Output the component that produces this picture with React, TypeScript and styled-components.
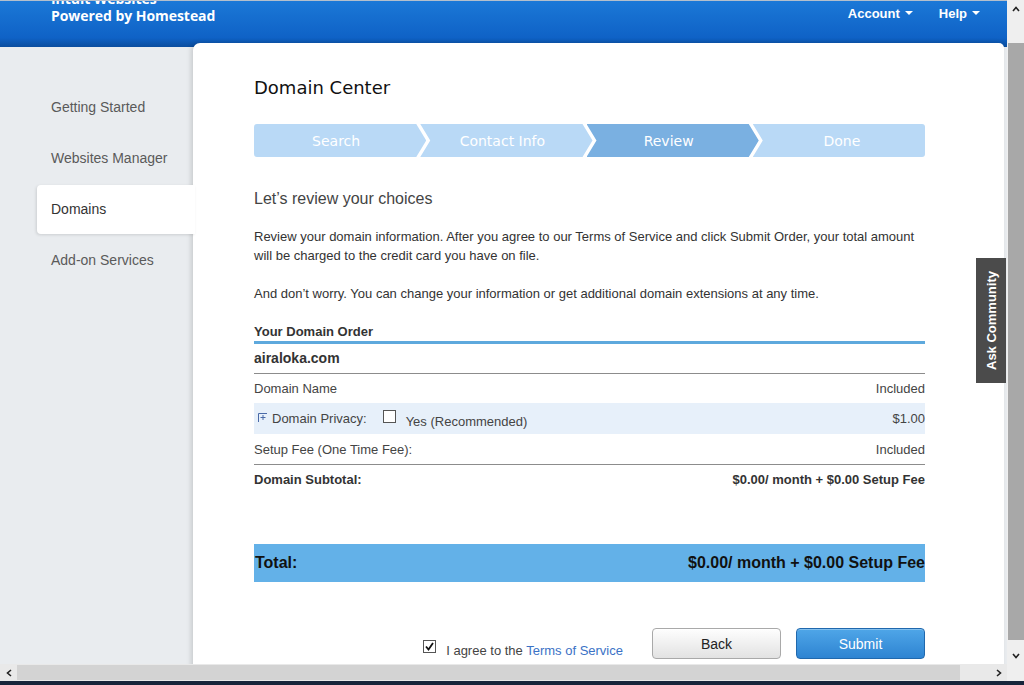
import React from 'react'
import styled, { createGlobalStyle } from 'styled-components'

const GlobalStyle = createGlobalStyle`
    html, body {
        margin: 0;
        padding: 0;
        overflow: hidden;
    }
    body {
        font-family: "Liberation Sans", Arial, sans-serif;
        background: #ffffff;
    }
`

const steps = ['Search', 'Contact Info', 'Review', 'Done']
const navItems = ['Getting Started', 'Websites Manager', 'Domains', 'Add-on Services']

export default function App() {
    return (
        <>
            <GlobalStyle />
            <Frame>
                <Viewport>
                    <Header>
                        <Brand>
                            <BrandLine>Intuit Websites</BrandLine>
                            <BrandLine>Powered by Homestead</BrandLine>
                        </Brand>
                        <TopNav>
                            <TopLink>Account</TopLink>
                            <TopLink>Help</TopLink>
                        </TopNav>
                    </Header>
                    <Body>
                        <Sidebar>
                            {navItems.map((item) => (
                                <NavItem key={item} $active={item === 'Domains'}>
                                    {item}
                                </NavItem>
                            ))}
                        </Sidebar>
                        <Card>
                            <Title>Domain Center</Title>
                            <Stepper>
                                {steps.map((s, i) => (
                                    <Step
                                        key={s}
                                        $active={s === 'Review'}
                                        $first={i === 0}
                                        $last={i === steps.length - 1}
                                    >
                                        {s}
                                    </Step>
                                ))}
                            </Stepper>
                            <SubHeading>Let’s review your choices</SubHeading>
                            <Para>
                                Review your domain information. After you agree to our Terms of Service and click
                                Submit Order, your total amount will be charged to the credit card you have on file.
                            </Para>
                            <Para $gap>
                                And don’t worry. You can change your information or get additional domain extensions
                                at any time.
                            </Para>
                            <OrderHeading>Your Domain Order</OrderHeading>
                            <DomainTitle>airaloka.com</DomainTitle>
                            <Row $h={29}>
                                <span>Domain Name</span>
                                <span>Included</span>
                            </Row>
                            <Row $h={31} $shaded>
                                <PrivacyLeft>
                                    <ExpandIcon width="9" height="9" viewBox="0 0 9 9">
                                        <path d="M0.5 9 V0.5 H9" stroke="#4a6aa8" strokeWidth="1" fill="none" />
                                        <path d="M2.5 4.5 H7.5 M5 2 V7" stroke="#4a6aa8" strokeWidth="1" fill="none" />
                                    </ExpandIcon>
                                    <span>Domain Privacy:</span>
                                    <Box />
                                    <YesText>Yes (Recommended)</YesText>
                                </PrivacyLeft>
                                <span>$1.00</span>
                            </Row>
                            <Row $h={30} $divider>
                                <span>Setup Fee (One Time Fee):</span>
                                <span>Included</span>
                            </Row>
                            <Row $h={29} $bold>
                                <span>Domain Subtotal:</span>
                                <span>$0.00/ month + $0.00 Setup Fee</span>
                            </Row>
                            <TotalBar>
                                <span>Total:</span>
                                <span>$0.00/ month + $0.00 Setup Fee</span>
                            </TotalBar>
                            <Actions>
                                <Agree>
                                    <Box $checked>
                                        <svg width="9" height="9" viewBox="0 0 9 9">
                                            <path d="M1 4.5 L3.5 7.5 L8 1" stroke="#111" strokeWidth="1.8" fill="none" />
                                        </svg>
                                    </Box>
                                    <AgreeText>
                                        I agree to the <TermsLink>Terms of Service</TermsLink>
                                    </AgreeText>
                                </Agree>
                                <Button>Back</Button>
                                <Button $primary>Submit</Button>
                            </Actions>
                        </Card>
                    </Body>
                    <AskTab>Ask Community</AskTab>
                </Viewport>
                <VScroll>
                    <ArrowBox>
                        <svg width="8" height="6" viewBox="0 0 8 6">
                            <path d="M1 5 L4 1.5 L7 5" stroke="#222" strokeWidth="1.6" fill="none" />
                        </svg>
                    </ArrowBox>
                    <VTrack>
                        <VThumb />
                    </VTrack>
                    <ArrowBox>
                        <svg width="8" height="6" viewBox="0 0 8 6">
                            <path d="M1 1 L4 4.5 L7 1" stroke="#222" strokeWidth="1.6" fill="none" />
                        </svg>
                    </ArrowBox>
                </VScroll>
                <HScroll>
                    <ArrowBox>
                        <svg width="6" height="8" viewBox="0 0 6 8">
                            <path d="M5 1 L1.5 4 L5 7" stroke="#222" strokeWidth="1.6" fill="none" />
                        </svg>
                    </ArrowBox>
                    <HTrack>
                        <HThumb />
                    </HTrack>
                    <ArrowBox>
                        <svg width="6" height="8" viewBox="0 0 6 8">
                            <path d="M1 1 L4.5 4 L1 7" stroke="#222" strokeWidth="1.6" fill="none" />
                        </svg>
                    </ArrowBox>
                </HScroll>
                <Corner />
                <BottomEdge />
            </Frame>
        </>
    )
}

const Frame = styled.div`
    display: grid;
    grid-template-columns: 1007px 17px;
    grid-template-rows: 664px 17px 4px;
    width: 1024px;
    height: 685px;
`

const Viewport = styled.div`
    position: relative;
    overflow: hidden;
    background: #e9ecef;
`

const Header = styled.header`
    height: 47px;
    box-sizing: border-box;
    border-top: 1px solid #b4bfcc;
    background: linear-gradient(#1b78d7, #0f62c6 80%, #0a4d9e);
    display: flex;
    justify-content: space-between;
    align-items: flex-start;
    overflow: hidden;
`

const Brand = styled.div`
    margin-top: -11px;
    padding-left: 51px;
    display: flex;
    flex-direction: column;
`

const BrandLine = styled.div`
    font-family: "Open Sans", sans-serif;
    font-weight: 700;
    font-size: 14px;
    line-height: 17px;
    color: #ffffff;
    letter-spacing: -0.05px;
`

const TopNav = styled.nav`
    display: flex;
    gap: 26px;
    padding: 5px 27px 0 0;
`

const TopLink = styled.span`
    display: flex;
    align-items: center;
    gap: 5px;
    font-size: 13px;
    line-height: 16px;
    font-weight: 700;
    color: #ffffff;

    &::after {
        content: '';
        border-left: 4px solid transparent;
        border-right: 4px solid transparent;
        border-top: 4px solid #ffffff;
        margin-top: -2px;
    }
`

const Body = styled.div`
    display: flex;
    align-items: flex-start;
`

const Sidebar = styled.nav`
    width: 193px;
    flex-shrink: 0;
    padding-top: 36px;
    display: flex;
    flex-direction: column;
    gap: 2px;
    position: relative;
    z-index: 2;
`

const NavItem = styled.div<{ $active?: boolean }>`
    margin-left: 37px;
    margin-right: ${(p) => (p.$active ? '-2px' : '0')};
    height: 49px;
    line-height: 49px;
    padding-left: 14px;
    font-size: 14px;
    color: ${(p) => (p.$active ? '#333333' : '#5a5a5a')};
    background: ${(p) => (p.$active ? '#ffffff' : 'transparent')};
    border-radius: 4px 0 0 4px;
    box-shadow: ${(p) => (p.$active ? '-1px 1px 3px rgba(0, 0, 0, 0.12)' : 'none')};
`

const Card = styled.main`
    position: relative;
    z-index: 1;
    width: 811px;
    flex-shrink: 0;
    margin-top: -4px;
    min-height: 640px;
    box-sizing: border-box;
    padding: 33px 79px 0 61px;
    background: #ffffff;
    border-radius: 7px 5px 0 0;
    box-shadow: -2px 0 5px rgba(0, 0, 0, 0.14);
`

const Title = styled.h1`
    margin: 0;
    font-family: "DejaVu Sans", Verdana, sans-serif;
    font-weight: 400;
    font-size: 18px;
    line-height: 24px;
    color: #111111;
`

const Stepper = styled.div`
    display: flex;
    margin-top: 24px;
    height: 33px;
`

const Step = styled.div<{ $active?: boolean; $first?: boolean; $last?: boolean }>`
    flex: none;
    width: calc((100% + 18px) / 4);
    box-sizing: border-box;
    display: flex;
    align-items: center;
    justify-content: center;
    margin-left: ${(p) => (p.$first ? '0' : '-6px')};
    padding: ${(p) => (p.$last ? '0 0 0 6px' : '0 8px 0 0')};
    background: ${(p) => (p.$active ? '#7ab0e1' : '#b9d9f6')};
    color: #ffffff;
    font-family: "DejaVu Sans", Verdana, sans-serif;
    font-size: 14px;
    border-radius: ${(p) => (p.$first ? '3px 0 0 3px' : p.$last ? '0 3px 3px 0' : '0')};
    clip-path: ${(p) =>
        p.$first
            ? 'polygon(0 0, calc(100% - 10px) 0, 100% 50%, calc(100% - 10px) 100%, 0 100%)'
            : p.$last
              ? 'polygon(0 0, 100% 0, 100% 100%, 0 100%, 10px 50%)'
              : 'polygon(0 0, calc(100% - 10px) 0, 100% 50%, calc(100% - 10px) 100%, 0 100%, 10px 50%)'};
`

const SubHeading = styled.h2`
    margin: 32px 0 0;
    font-size: 16px;
    font-weight: 400;
    line-height: 20px;
    color: #444444;
`

const Para = styled.p<{ $gap?: boolean }>`
    margin: ${(p) => (p.$gap ? '19px' : '18px')} 0 0;
    font-size: 13px;
    line-height: 19px;
    color: #333333;
`

const OrderHeading = styled.div`
    margin-top: 19px;
    font-size: 13px;
    font-weight: 700;
    line-height: 19px;
    color: #333333;
    border-bottom: 3px solid #5ea9dd;
`

const DomainTitle = styled.div`
    height: 29px;
    line-height: 28px;
    font-size: 14px;
    font-weight: 700;
    color: #333333;
    border-bottom: 1px solid #8c8c8c;
`

const Row = styled.div<{ $h: number; $shaded?: boolean; $divider?: boolean; $bold?: boolean }>`
    display: flex;
    justify-content: space-between;
    align-items: center;
    height: ${(p) => p.$h}px;
    font-size: 13px;
    font-weight: ${(p) => (p.$bold ? 700 : 400)};
    color: ${(p) => (p.$bold ? '#333333' : '#444444')};
    background: ${(p) => (p.$shaded ? '#e7f0fa' : 'transparent')};
    border-bottom: ${(p) => (p.$divider ? '1px solid #8c8c8c' : 'none')};
`

const PrivacyLeft = styled.div`
    display: flex;
    align-items: center;
    padding-left: 4px;
`

const ExpandIcon = styled.svg`
    align-self: flex-start;
    margin: 5px 5px 0 0;
`

const Box = styled.span<{ $checked?: boolean }>`
    display: inline-flex;
    align-items: center;
    justify-content: center;
    width: 11px;
    height: 11px;
    border: 1px solid #555555;
    background: #ffffff;
    align-self: ${(p) => (p.$checked ? 'flex-start' : 'center')};
    margin: ${(p) => (p.$checked ? '-3px 10px 0 0' : '-4px 10px 0 16px')};
`

const YesText = styled.span`
    margin-top: 6px;
`

const TotalBar = styled.div`
    display: flex;
    justify-content: space-between;
    align-items: center;
    margin-top: 50px;
    height: 38px;
    padding-left: 1px;
    background: #63b1e8;
    font-size: 16px;
    font-weight: 700;
    color: #111111;
`

const Actions = styled.div`
    display: flex;
    justify-content: flex-end;
    align-items: center;
    gap: 15px;
    margin-top: 46px;
`

const Agree = styled.label`
    display: flex;
    align-items: center;
    margin-right: 14px;
    padding-top: 14px;
    font-size: 13px;
    color: #444444;
`

const AgreeText = styled.span`
    line-height: 16px;
`

const TermsLink = styled.a`
    color: #3b72c6;
    text-decoration: none;
`

const Button = styled.button<{ $primary?: boolean }>`
    width: 129px;
    height: 31px;
    border-radius: 4px;
    font-family: "Liberation Sans", Arial, sans-serif;
    font-size: 14px;
    cursor: pointer;
    color: ${(p) => (p.$primary ? '#ffffff' : '#222222')};
    border: 1px solid ${(p) => (p.$primary ? '#2068ad' : '#a9a9a9')};
    background: ${(p) =>
        p.$primary ? 'linear-gradient(#4fa6e8, #2e84d2)' : 'linear-gradient(#fefefe, #e2e2e2)'};
    box-shadow: ${(p) => (p.$primary ? 'inset 0 1px 0 rgba(255,255,255,0.3)' : 'inset 0 1px 0 #ffffff')};
`

const AskTab = styled.div`
    position: absolute;
    top: 258px;
    right: 1px;
    width: 30px;
    height: 125px;
    display: flex;
    align-items: center;
    justify-content: center;
    background: #4b4b4b;
    color: #ffffff;
    font-size: 13px;
    font-weight: 700;
    writing-mode: vertical-rl;
    transform: rotate(180deg);
    z-index: 3;
`

const VScroll = styled.div`
    display: flex;
    flex-direction: column;
    background: #efefef;
`

const ArrowBox = styled.div`
    width: 17px;
    height: 17px;
    display: flex;
    align-items: center;
    justify-content: center;
    flex-shrink: 0;
`

const VTrack = styled.div`
    flex: 1;
    display: flex;
    flex-direction: column;
    padding: 26px 0 7px 1px;
`

const VThumb = styled.div`
    flex: 1;
    background: #a8a8a8;
`

const HScroll = styled.div`
    display: flex;
    background: #e9e9e9;
`

const HTrack = styled.div`
    flex: 1;
    display: flex;
    padding: 1px 30px 1px 0;
`

const HThumb = styled.div`
    flex: 1;
    background: #d3d3d3;
`

const Corner = styled.div`
    background: #efefef;
`

const BottomEdge = styled.div`
    grid-column: 1 / 3;
    background: #17253b;
`
